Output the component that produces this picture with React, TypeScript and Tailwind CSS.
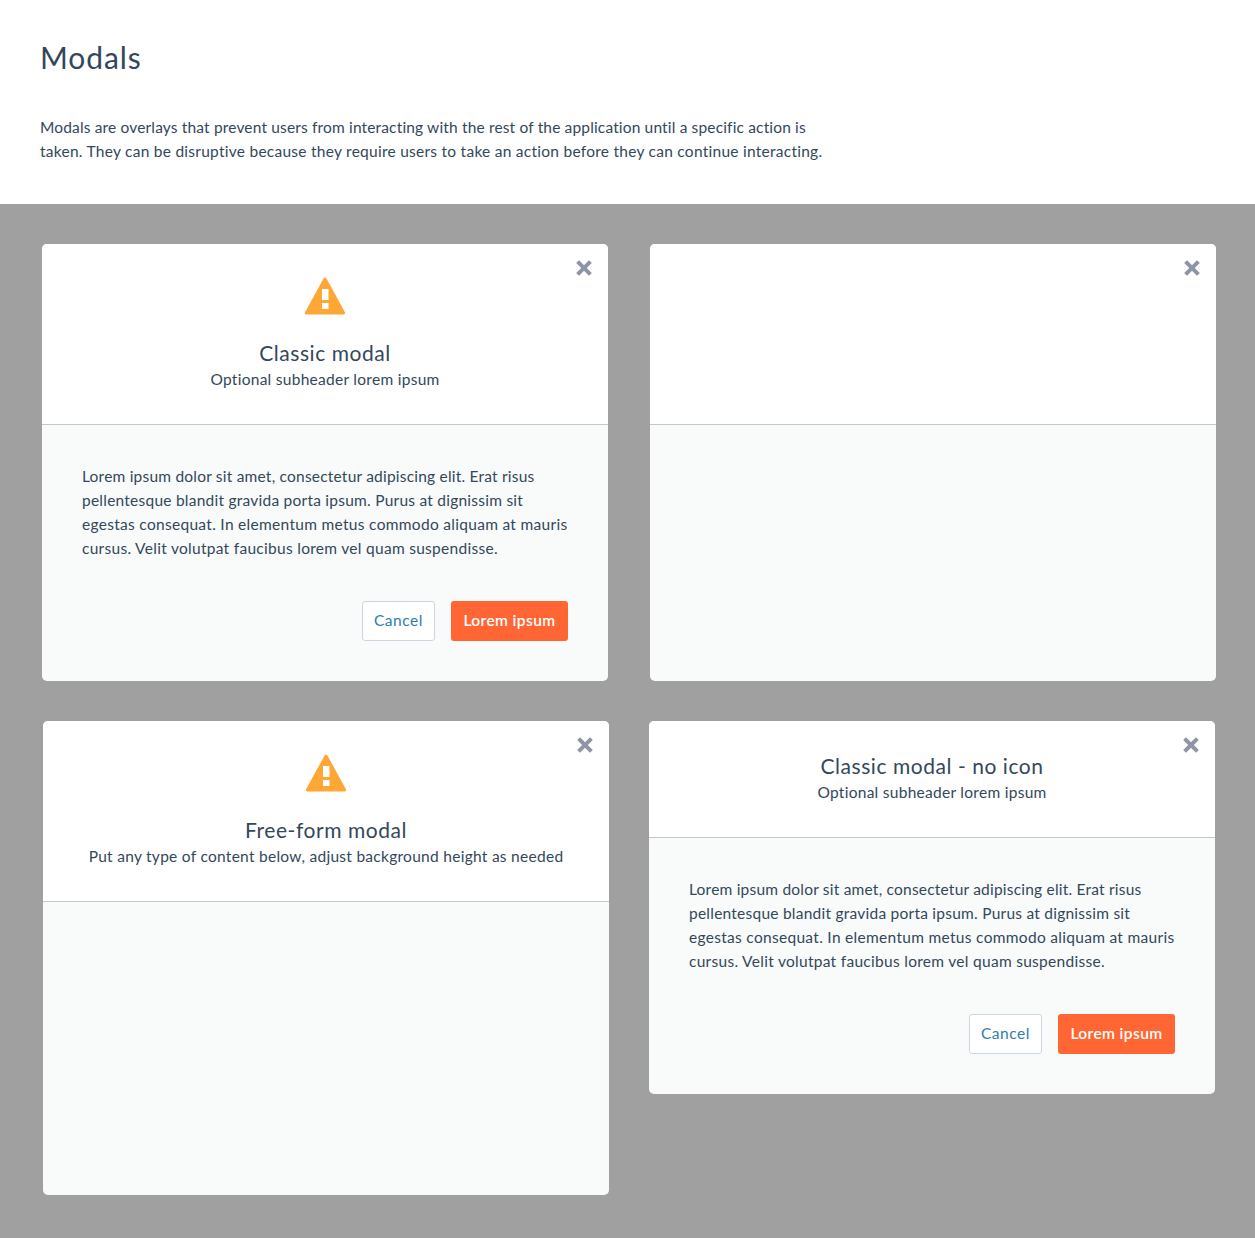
import React from 'react';

const CloseIcon = () => (
  <svg className="absolute top-[16px] right-[16px] w-[16px] h-[16px]" viewBox="0 0 16 16" fill="none">
    <path d="M1.6 1.6 L14.4 14.4 M14.4 1.6 L1.6 14.4" stroke="#8e95a6" strokeWidth="4" />
  </svg>
);

const WarnIcon = () => (
  <svg className="w-[40px] h-[38px] shrink-0" viewBox="0 0 40 38">
    <path d="M20 2 L38.6 36 H1.4 Z" fill="#ffa736" stroke="#ffa736" strokeWidth="3" strokeLinejoin="round" />
    <rect x="17" y="12" width="6.5" height="11" fill="#fff" />
    <rect x="17" y="26" width="6.5" height="6" fill="#fff" />
  </svg>
);

const Modal = ({ title, sub, icon, text, className }: { title?: string; sub?: string; icon?: boolean; text?: boolean; className: string }) => (
  <div className={`relative flex flex-col w-[566px] rounded-[5px] overflow-hidden bg-[#f9fbfa] ${className}`}>
    <CloseIcon />
    <div className={`bg-white border-b border-[#c5c8cb] flex flex-col items-center ${icon ? 'h-[181px] pt-[33px]' : title ? 'h-[117px] pt-[33px]' : 'h-[181px]'}`}>
      {icon && <WarnIcon />}
      {title && <h2 className={`text-[21px] leading-[24px] tracking-[0.55px] text-[#33475b] ${icon ? 'mt-[26px]' : ''}`}>{title}</h2>}
      {sub && <p className="mt-[2px] text-[15.5px] leading-[24px] tracking-[0.28px] text-[#33475b]">{sub}</p>}
    </div>
    {text && (
      <div className="px-[40px] pt-[39px] pb-[40px]">
        <p className="text-[15.5px] leading-[24px] text-[#33475b] whitespace-nowrap">
          <span className="block tracking-[0.21px]">Lorem ipsum dolor sit amet, consectetur adipiscing elit. Erat risus</span>
          <span className="block tracking-[0.24px]">pellentesque blandit gravida porta ipsum. Purus at dignissim sit</span>
          <span className="block tracking-[0.3px]">egestas consequat. In elementum metus commodo aliquam at mauris</span>
          <span className="block tracking-[0.29px]">cursus. Velit volutpat faucibus lorem vel quam suspendisse.</span>
        </p>
        <div className="flex justify-end gap-4 mt-[41px]">
          <button className="w-[73px] h-[40px] pb-[1px] rounded-[3px] border border-[#cbd6e2] bg-white text-[15.5px] tracking-[0.55px] text-[#2e7ea8]">Cancel</button>
          <button className="w-[117px] h-[40px] pb-[1px] rounded-[3px] bg-[#ff6633] text-[15.5px] font-semibold tracking-[0.4px] text-white">Lorem ipsum</button>
        </div>
      </div>
    )}
  </div>
);

export default function App() {
  return (
    <div className="min-h-[1238px] bg-[#a0a0a0] font-['Lato',sans-serif]">
      <header className="bg-white h-[204px] pl-[40px] pt-[37px]">
        <h1 className="text-[30px] leading-[40px] tracking-[0.9px] text-[#33475b]">Modals</h1>
        <p className="mt-[38px] text-[15.5px] leading-[24px] text-[#33475b] whitespace-nowrap">
          <span className="block tracking-[0.155px]">Modals are overlays that prevent users from interacting with the rest of the application until a specific action is</span>
          <span className="block tracking-[0.26px]">taken. They can be disruptive because they require users to take an action before they can continue interacting.</span>
        </p>
      </header>
      <div className="flex items-start gap-[42px] pl-[42px] pt-[40px]">
        <Modal className="h-[437px]" icon title="Classic modal" sub="Optional subheader lorem ipsum" text />
        <Modal className="h-[437px]" />
      </div>
      <div className="flex items-start gap-[40px] pl-[43px] pt-[40px]">
        <Modal className="h-[474px]" icon title="Free-form modal" sub="Put any type of content below, adjust background height as needed" />
        <Modal className="h-[373px]" title="Classic modal - no icon" sub="Optional subheader lorem ipsum" text />
      </div>
    </div>
  );
}
